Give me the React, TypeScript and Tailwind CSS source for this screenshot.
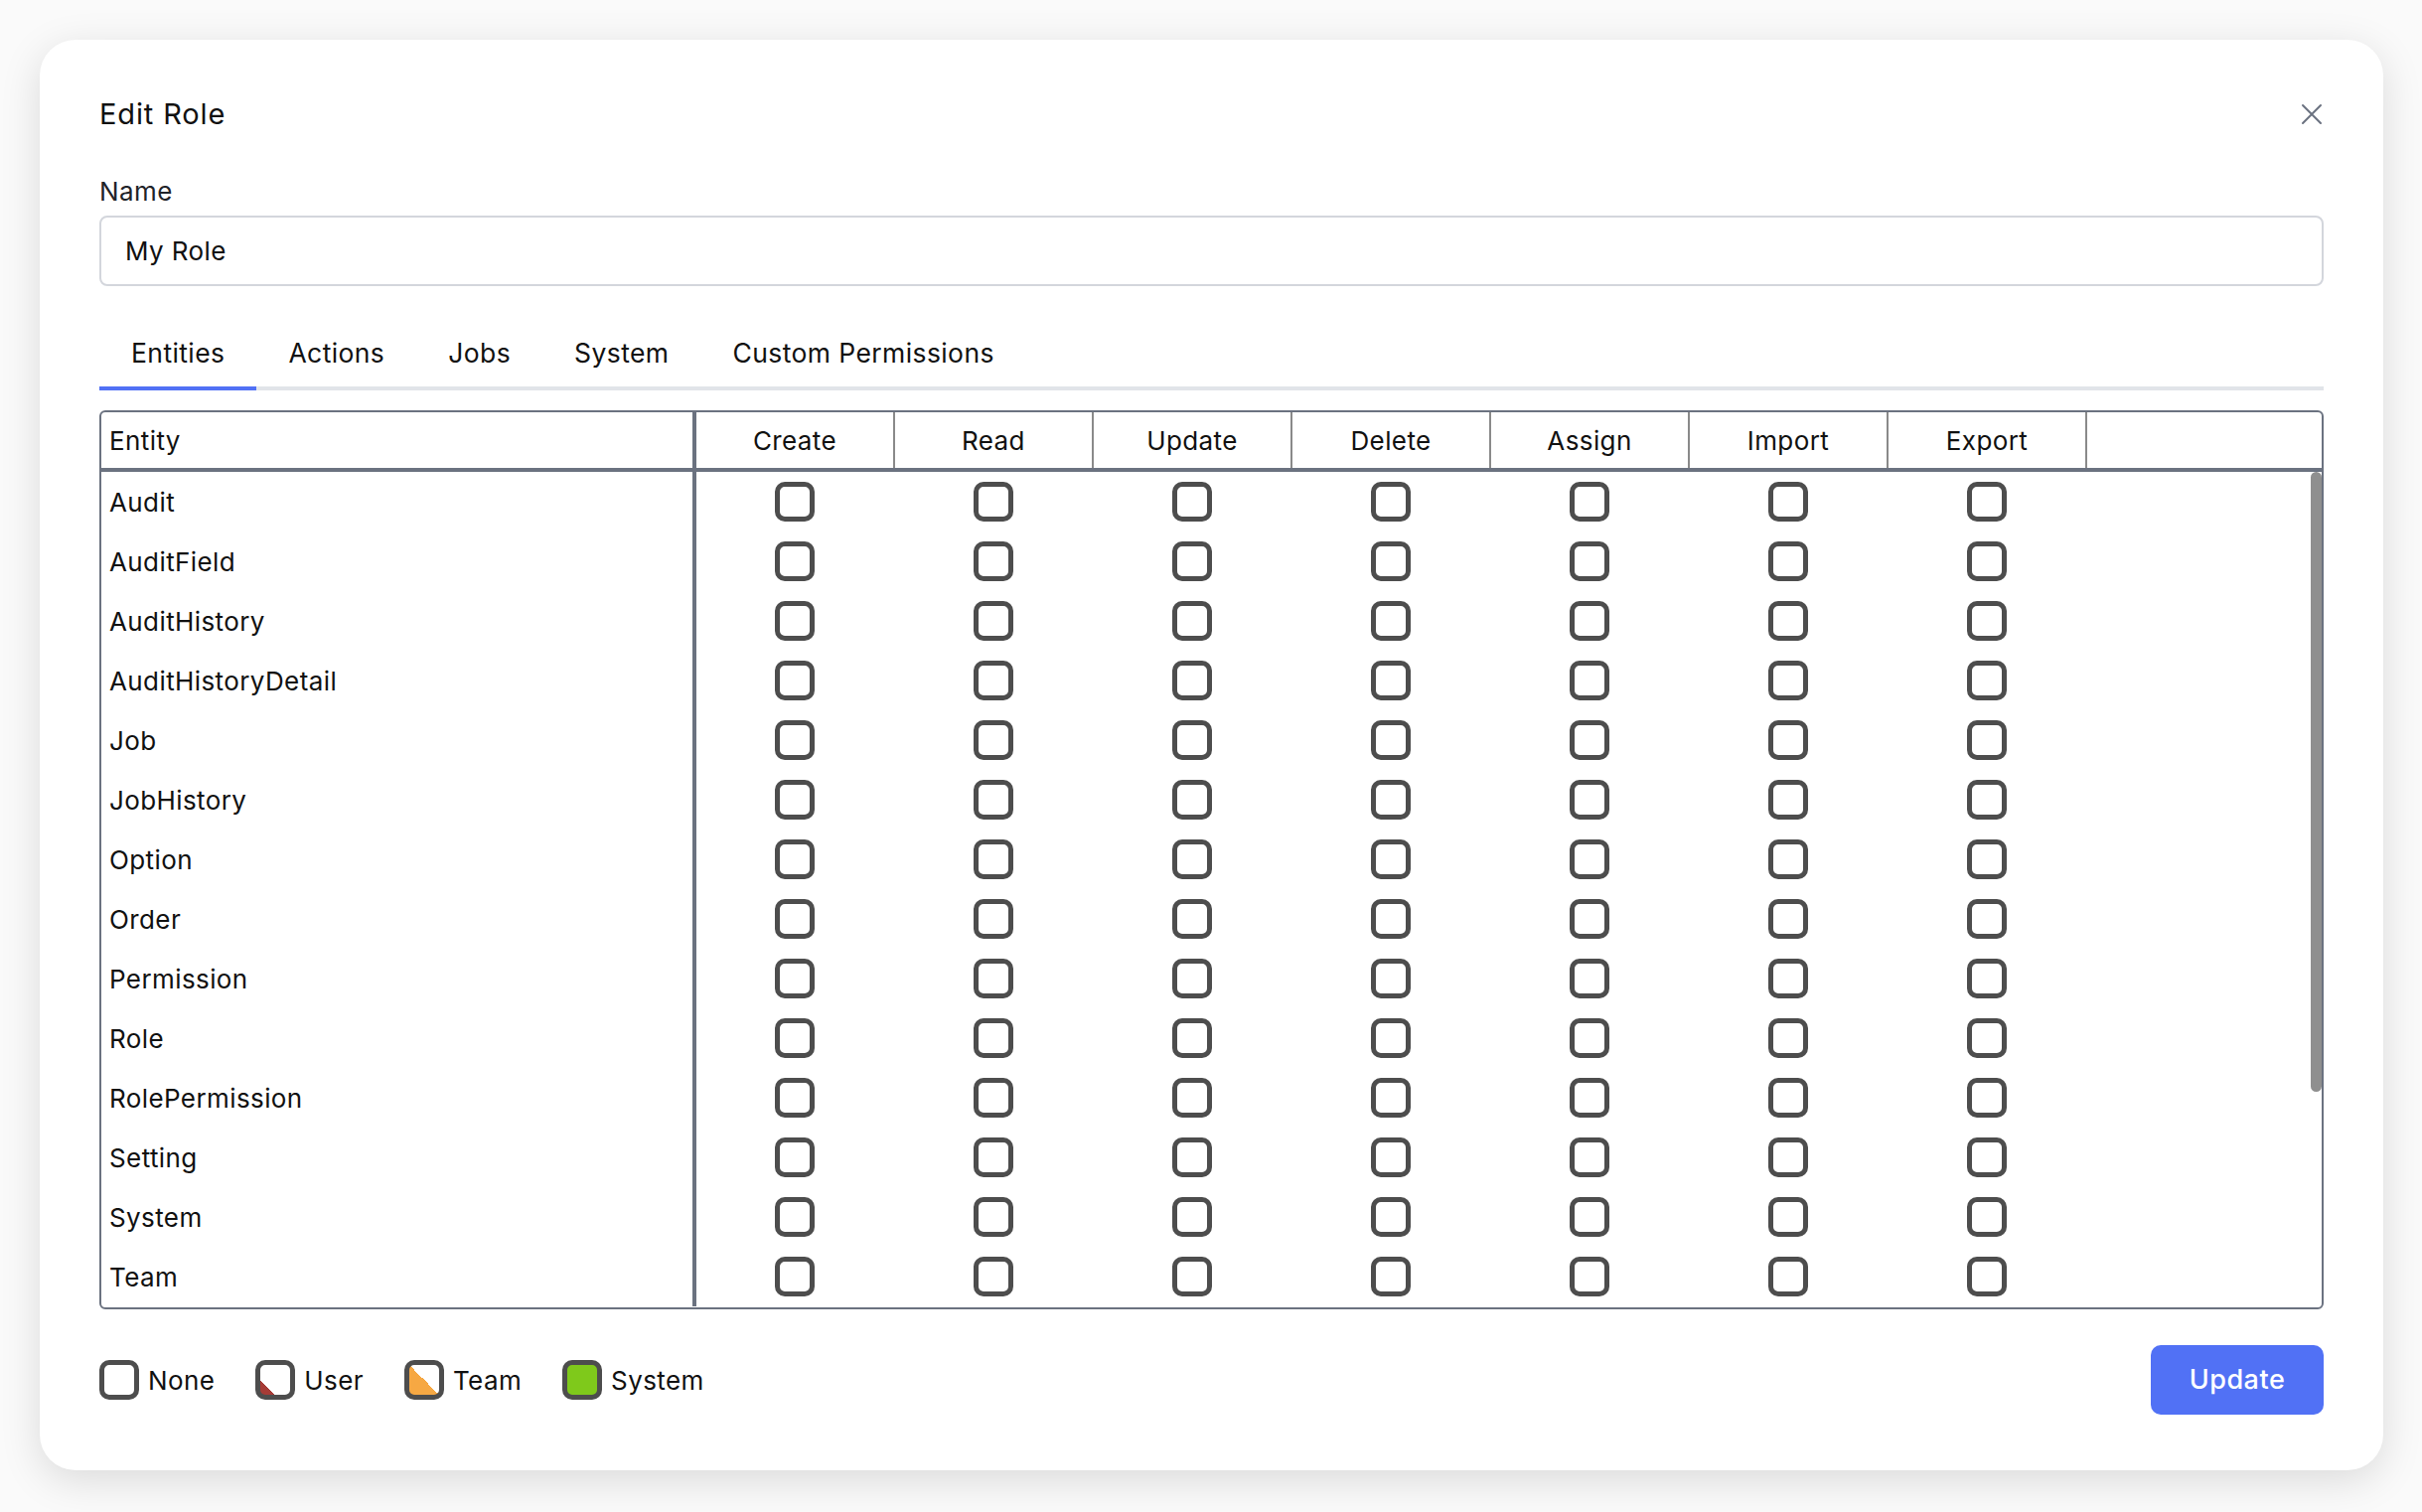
import React from "react";

const ENTITIES = [
  "Audit",
  "AuditField",
  "AuditHistory",
  "AuditHistoryDetail",
  "Job",
  "JobHistory",
  "Option",
  "Order",
  "Permission",
  "Role",
  "RolePermission",
  "Setting",
  "System",
  "Team",
];

const COLUMNS = ["Create", "Read", "Update", "Delete", "Assign", "Import", "Export"];

const TABS = ["Entities", "Actions", "Jobs", "System", "Custom Permissions"];

type Level = "none" | "user" | "team" | "system";

const LEVEL_BG: Record<Level, string> = {
  none: "bg-white",
  user: "bg-[linear-gradient(to_top_right,#a63b36_25%,transparent_25%)]",
  team: "bg-[linear-gradient(to_top_right,#f6a843_50%,transparent_50%)]",
  system: "bg-[#7fc91b]",
};

function LevelBox({ level = "none" }: { level?: Level }) {
  return (
    <span
      className={`block w-[40px] h-[40px] shrink-0 rounded-[10px] border-[5px] border-[#4d4d4d] ${LEVEL_BG[level]}`}
    />
  );
}

function CloseIcon() {
  return (
    <svg width="22" height="22" viewBox="0 0 22 22" fill="none" stroke="#6b7280" strokeWidth="2" strokeLinecap="round">
      <path d="M2 2 L20 20 M20 2 L2 20" />
    </svg>
  );
}

export default function App() {
  return (
    <div className="min-h-screen bg-[#fafafa] p-10 font-['Inter',sans-serif] tracking-[0.025em] text-[#111]">
      <div className="w-[2359px] rounded-[36px] bg-white px-[60px] pt-[55px] pb-[56px] shadow-[0_10px_40px_rgba(0,0,0,0.13)]">
        {/* Header */}
        <div className="flex h-[40px] items-center justify-between">
          <h2 className="text-[29px] leading-[40px] tracking-[0.03em]">Edit Role</h2>
          <button className="mr-[1px] flex h-[40px] items-center">
            <CloseIcon />
          </button>
        </div>

        {/* Name */}
        <label className="mt-[40px] block text-[26px] leading-[36px] text-[#1f2329]">Name</label>
        <div className="mt-[6px] flex h-[71px] items-center rounded-[8px] border-2 border-[#d3d6dc] px-[24px] text-[26px]">
          My Role
        </div>

        {/* Tabs */}
        <div className="mt-[34px] flex border-b-4 border-[#e1e4e9]">
          {TABS.map((t, i) => (
            <button
              key={t}
              className={`-mb-[4px] border-b-4 px-[32px] pt-[15px] pb-[16px] text-[26.5px] leading-[36px] ${
                i === 0 ? "border-[#5171f5]" : "border-transparent"
              }`}
            >
              {t}
            </button>
          ))}
        </div>

        {/* Table */}
        <div className="mt-[20px] overflow-hidden rounded-[6px] border-2 border-[#6b7280] text-[26px]">
          <div className="flex h-[60px] border-b-4 border-[#6b7280]">
            <div className="flex w-[599px] items-center border-r-4 border-[#6b7280] pl-[8px]">Entity</div>
            {COLUMNS.map((c) => (
              <div key={c} className="flex w-[200px] items-center justify-center border-r-2 border-[#8a8a8a]">
                {c}
              </div>
            ))}
            <div className="flex-1" />
          </div>

          <div className="relative h-[841px] overflow-hidden">
            {ENTITIES.map((e) => (
              <div key={e} className="flex h-[60px]">
                <div className="flex w-[599px] items-center border-r-4 border-[#6b7280] pl-[8px]">{e}</div>
                {COLUMNS.map((c) => (
                  <div key={c} className="flex w-[200px] items-center justify-center pr-[2px]">
                    <LevelBox />
                  </div>
                ))}
                <div className="flex-1" />
              </div>
            ))}
            {/* scrollbar thumb */}
            <div className="absolute right-0 top-0 h-[624px] w-[11px] rounded-full bg-[#8f8f8f]" />
          </div>
        </div>

        {/* Footer */}
        <div className="mt-[36px] flex h-[70px] items-center justify-between">
          <div className="flex items-center gap-[41px] text-[26px]">
            {(
              [
                ["none", "None"],
                ["user", "User"],
                ["team", "Team"],
                ["system", "System"],
              ] as [Level, string][]
            ).map(([lvl, label]) => (
              <div key={lvl} className="flex items-center gap-[9px]">
                <LevelBox level={lvl} />
                <span>{label}</span>
              </div>
            ))}
          </div>
          <button className="h-[70px] w-[174px] rounded-[10px] bg-[#5171f5] text-[27px] font-medium tracking-[0.02em] text-white">
            Update
          </button>
        </div>
      </div>
    </div>
  );
}
